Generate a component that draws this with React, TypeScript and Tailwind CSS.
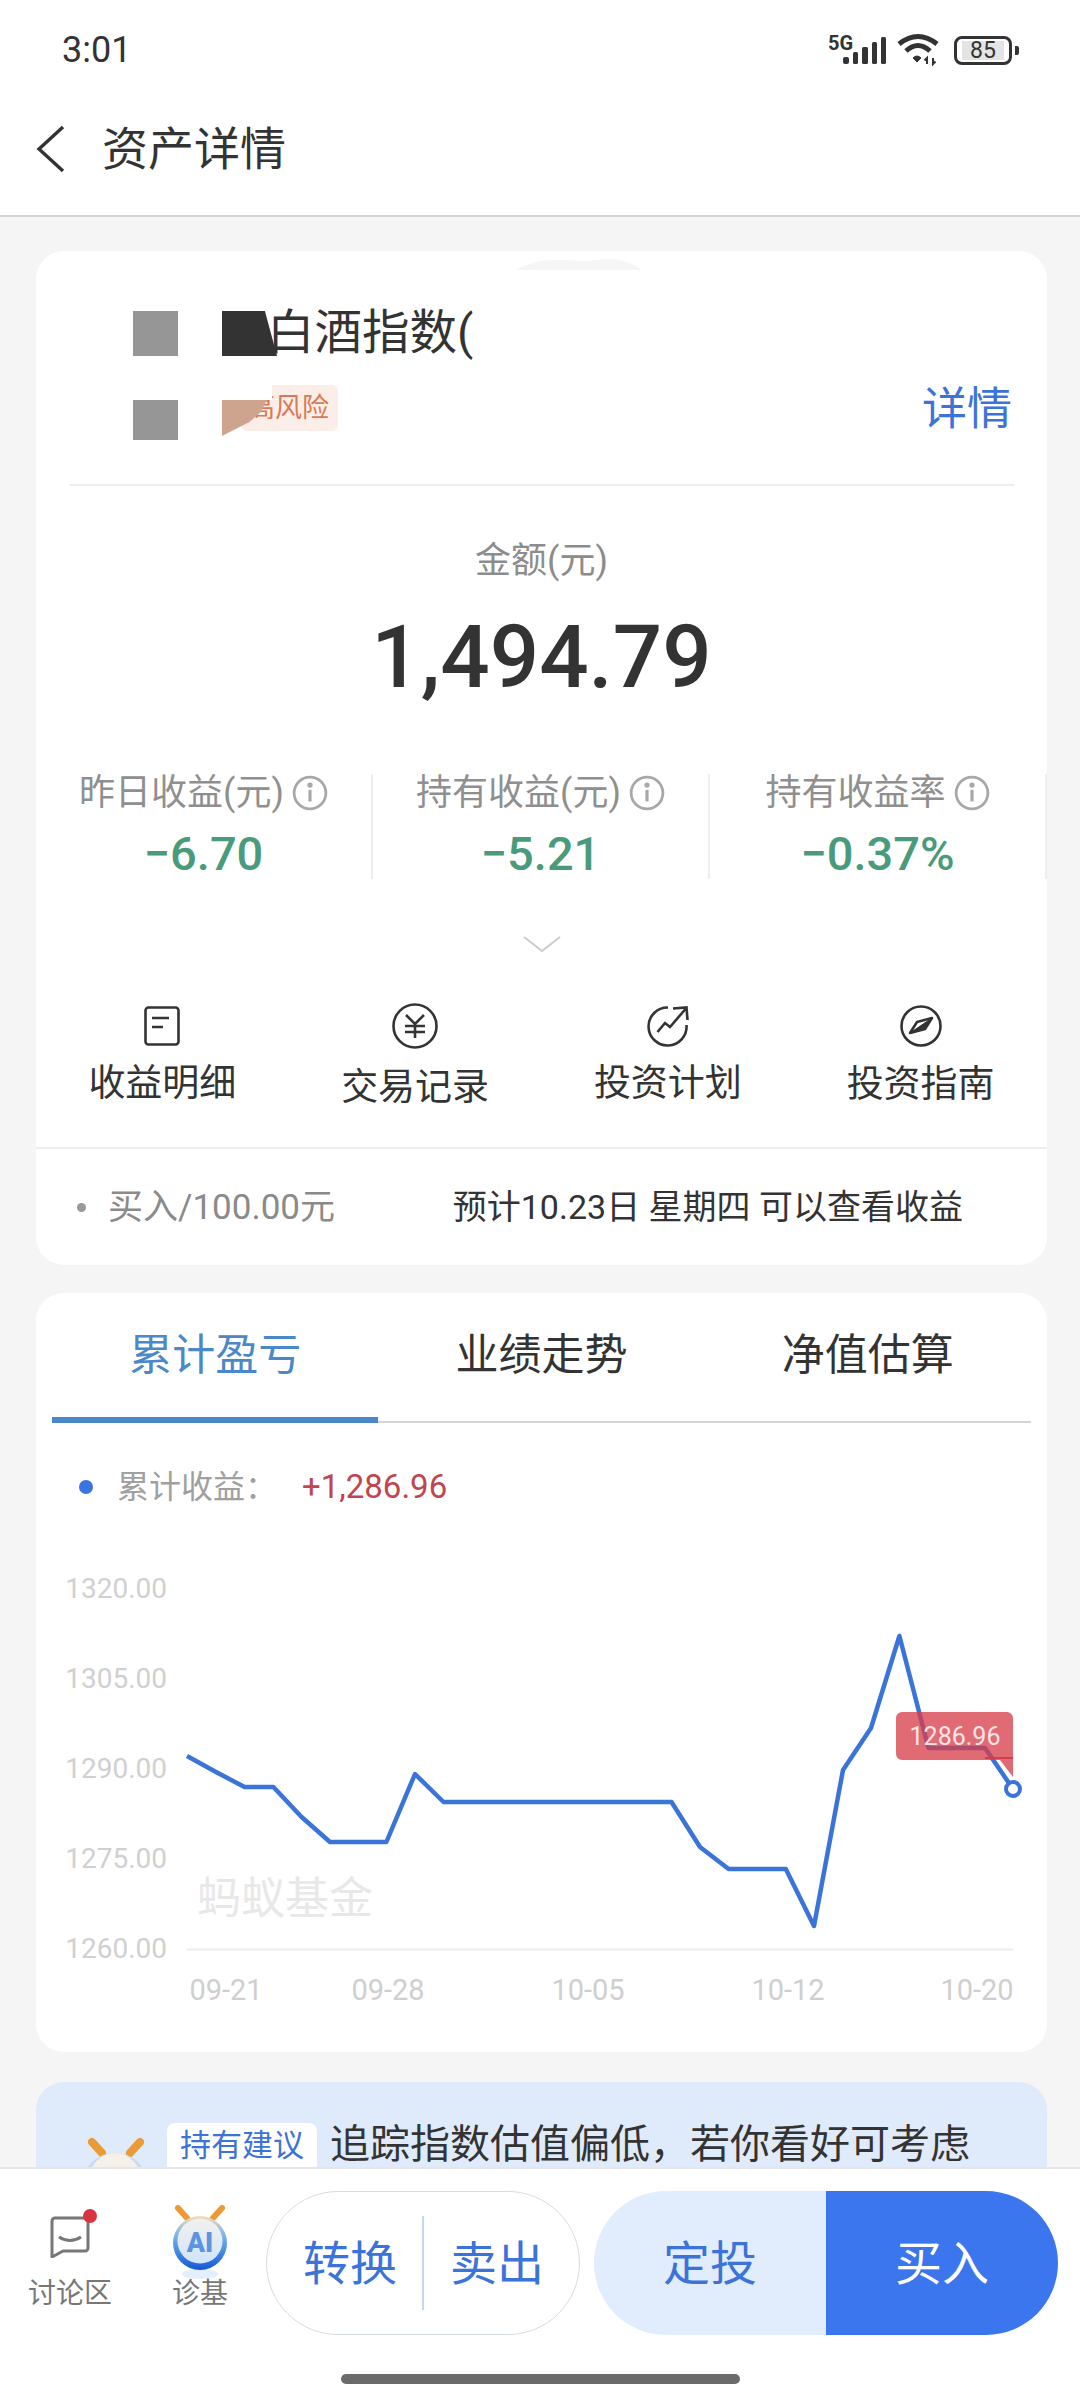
const stats = [
  { label: "昨日收益(元)", value: "−6.70" },
  { label: "持有收益(元)", value: "−5.21" },
  { label: "持有收益率", value: "−0.37%" },
];

const chartPoints =
  "187,1756 216,1772 244.5,1787 273.4,1787 301.6,1817 330,1842 358,1842 386.4,1842 415,1774 443.5,1802 671.5,1802 700,1847 728.6,1869 785.8,1869 814,1926 843,1770 871,1728 899.4,1636 928.4,1748 985,1748 1013,1789";

const yLabels = [
  { text: "1320.00", y: 1588 },
  { text: "1305.00", y: 1678 },
  { text: "1290.00", y: 1768 },
  { text: "1275.00", y: 1858 },
  { text: "1260.00", y: 1948 },
];

const xLabels = [
  { text: "09-21", x: 226 },
  { text: "09-28", x: 388 },
  { text: "10-05", x: 588 },
  { text: "10-12", x: 788 },
  { text: "10-20", x: 977 },
];

function StatusIcons() {
  return (
    <div className="flex items-center">
      <svg width="66" height="36" viewBox="0 0 66 36" className="mr-[4px]">
        <text x="2" y="18" fontSize="20" fontWeight="700" fill="#333" fontFamily="Roboto, sans-serif">5G</text>
        <rect x="17" y="25" width="6" height="7" rx="2" fill="#333" />
        <rect x="27" y="20" width="5" height="12" rx="1.5" fill="#333" />
        <rect x="36" y="15" width="6" height="17" rx="1.5" fill="#333" />
        <rect x="46" y="10" width="5" height="22" rx="1.5" fill="#333" />
        <rect x="55" y="5" width="5" height="27" rx="1.5" fill="#333" />
      </svg>
      <svg width="46" height="34" viewBox="0 0 46 34" className="mr-[12px]" fill="none" stroke="#333">
        <path d="M3 11 Q22 -4 41 11" strokeWidth="5" />
        <path d="M10 18 Q22 7 34 18" strokeWidth="5" />
        <path d="M17 25 Q21 21 25 25 L21 29 Z" fill="#333" strokeWidth="1" />
        <path d="M31 31V25L28.5 27.5M37 25V31L39.5 28.5" strokeWidth="2" />
      </svg>
      <div className="flex h-[29px] w-[58px] items-center justify-center rounded-[8px] border-[3px] border-[#333] px-[3px]">
        <span className="flex h-[19px] w-[42px] items-center justify-center bg-[#e4e4e4] text-[23px] leading-none text-[#333]">85</span>
      </div>
      <div className="ml-[3px] h-[9px] w-[4px] rounded-r-[2px] bg-[#333]" />
    </div>
  );
}

function InfoIcon() {
  return (
    <svg width="36" height="36" viewBox="0 0 34 34" fill="none" stroke="#a8a8a8" strokeWidth="2.6">
      <circle cx="17" cy="17" r="15" />
      <path d="M17 14V25" strokeWidth="3" />
      <circle cx="17" cy="9.5" r="1.2" fill="#a8a8a8" />
    </svg>
  );
}

function DocIcon() {
  return (
    <svg width="36" height="40" viewBox="0 0 36 40" fill="none" stroke="#333" strokeWidth="2.6">
      <rect x="1.5" y="1.5" width="33" height="37" rx="3" />
      <path d="M8 12H25M8 21H19" />
    </svg>
  );
}

function YuanIcon() {
  return (
    <svg width="46" height="46" viewBox="0 0 46 46" fill="none" stroke="#333" strokeWidth="2.6">
      <circle cx="23" cy="23" r="21.5" />
      <path d="M14 12L23 21L32 12M13 23H33M13 29H33M23 21V35" />
    </svg>
  );
}

function TrendIcon() {
  return (
    <svg width="44" height="42" viewBox="0 0 44 42" fill="none" stroke="#333" strokeWidth="2.6">
      <path d="M22 2.5A19 19 0 1 0 40.5 20" />
      <path d="M11.5 27L19 18L24 22L39.5 4M27 3.5L40.5 2.5L41.5 15" />
    </svg>
  );
}

function CompassIcon() {
  return (
    <svg width="42" height="42" viewBox="0 0 42 42" fill="none" stroke="#333" strokeWidth="2.6">
      <circle cx="21" cy="21" r="19.5" />
      <path d="M10 28L17 17L32 13L25 24Z" strokeLinejoin="round" />
      <path d="M10 28L25 24L32 13Z" fill="#333" strokeWidth="1" />
    </svg>
  );
}

const actions = [
  { label: "收益明细", icon: <DocIcon />, top: "mt-[13px]" },
  { label: "交易记录", icon: <YuanIcon />, top: "mt-[17px]" },
  { label: "投资计划", icon: <TrendIcon />, top: "mt-[13px]" },
  { label: "投资指南", icon: <CompassIcon />, top: "mt-[14px]" },
];

function AiIcon() {
  return (
    <svg width="62" height="76" viewBox="0 0 62 76" fill="none">
      <defs>
        <linearGradient id="aiRing" x1="0" y1="0" x2="0" y2="1">
          <stop offset="0" stopColor="#f6dcb8" />
          <stop offset="0.4" stopColor="#6fb0ea" />
          <stop offset="1" stopColor="#1557d6" />
        </linearGradient>
        <linearGradient id="aiBody" x1="0" y1="0" x2="0" y2="1">
          <stop offset="0" stopColor="#f3f1ec" />
          <stop offset="1" stopColor="#d0e4fa" />
        </linearGradient>
      </defs>
      <path d="M9 3L18 13M53 3L44 13" stroke="#ea9b36" strokeWidth="6" strokeLinecap="round" />
      <ellipse cx="31" cy="69" rx="18" ry="5" fill="#e4eefc" />
      <circle cx="31" cy="38" r="27" fill="url(#aiRing)" />
      <circle cx="31" cy="36" r="22.5" fill="url(#aiBody)" />
      <text x="31" y="47" textAnchor="middle" fontSize="27" fontWeight="900" fill="#5c94e0" fontFamily="Roboto, sans-serif">AI</text>
    </svg>
  );
}

function Mascot() {
  return (
    <svg width="66" height="33" viewBox="0 0 66 33" fill="none">
      <path d="M10 8L20 19M58 8L48 19" stroke="#ea9b36" strokeWidth="8" strokeLinecap="round" />
      <ellipse cx="33" cy="46" rx="31" ry="27" fill="#c9dcef" />
      <ellipse cx="33" cy="46" rx="26" ry="27" fill="#f6f1e8" />
    </svg>
  );
}

function Chart() {
  return (
    <svg width="1011" height="522" viewBox="36 1530 1011 522" className="block [font-family:Roboto,sans-serif]">
      {yLabels.map((l) => (
        <text key={l.text} x="167" y={l.y + 10} textAnchor="end" fontSize="28" fill="#d0d0d0">{l.text}</text>
      ))}
      {xLabels.map((l) => (
        <text key={l.text} x={l.x} y={2000} textAnchor="middle" fontSize="29" fill="#cfcfcf">{l.text}</text>
      ))}
      <text x="197" y="1914" fontSize="44" fill="#e8e8e8" fontFamily="'Noto Sans CJK SC', sans-serif">蚂蚁基金</text>
      <path d="M187 1949.5H1013" stroke="#eeeeee" strokeWidth="2" />
      <polyline points={chartPoints} fill="none" stroke="#3b74d9" strokeWidth="4.5" strokeLinejoin="round" />
      <path
        d="M902 1712H1007A6 6 0 0 1 1013 1718V1777L1000 1760H902A6 6 0 0 1 896 1754V1718A6 6 0 0 1 902 1712Z"
        fill="#d63c48"
        fillOpacity="0.76"
      />
      <path d="M985 1758H1013" stroke="#d63c48" strokeWidth="2" />
      <text x="955" y="1745" textAnchor="middle" fontSize="25" fill="#fbe3e4">1286.96</text>
      <circle cx="1013" cy="1789" r="7" fill="#fff" stroke="#3b74d9" strokeWidth="4" />
    </svg>
  );
}

export default function App() {
  return (
    <div className="flex h-[2400px] w-[1080px] flex-col overflow-hidden bg-[#f5f5f5] [font-family:Roboto,'Noto_Sans_CJK_SC',sans-serif]">
      {/* status bar + title */}
      <header className="h-[217px] shrink-0 border-b-2 border-[#d2d2d2] bg-white">
        <div className="flex h-[100px] items-center justify-between pl-[62px] pr-[61px]">
          <span className="text-[36px] leading-none text-[#333]">3:01</span>
          <StatusIcons />
        </div>
        <div className="flex h-[98px] items-center pl-[36px]">
          <svg width="30" height="48" viewBox="0 0 30 48" fill="none" stroke="#333" strokeWidth="3.4">
            <path d="M27 2L3 24L27 46" />
          </svg>
          <h1 className="ml-[36px] text-[46px] font-normal leading-none text-[#333]">资产详情</h1>
        </div>
      </header>

      <main className="min-h-0 flex-1 overflow-hidden pl-[36px] pr-[33px] pt-[34px]">
        {/* asset card */}
        <section className="relative overflow-hidden rounded-[28px] bg-white">
          <svg width="126" height="12" viewBox="0 0 126 12" className="absolute left-[480px] top-[7px]">
            <path d="M0 12Q20 0 50 2Q70 4 90 1Q110 0 126 12Z" fill="#f6f6f6" />
          </svg>
          <div className="mx-[33px] h-[235px] border-b-2 border-[#eeeeee] pl-[64px] pr-[2px] pt-[60px]">
            <div className="flex h-[45px] items-center">
              <div className="h-[45px] w-[45px] bg-[#969696]" />
              <div className="z-10 ml-[44px] h-[45px] w-[55px] bg-[#333333] [clip-path:polygon(0_0,78%_0,100%_100%,0_100%)]" />
              <span className="ml-[-10px] text-[47.5px] leading-none text-[#333]">白酒指数(</span>
            </div>
            <div className="mt-[29px] flex h-[55px] items-center justify-between">
              <div className="flex h-[55px] items-start">
                <div className="mt-[15px] h-[40px] w-[45px] bg-[#969696]" />
                <div className="relative ml-[63px] flex h-[46px] w-[97px] items-center justify-end rounded-[6px] bg-[#fbeee8] pr-[9px]">
                  <span className="text-[27px] leading-none text-[#d97a55]">高风险</span>
                  <div className="absolute left-[-19px] top-0 h-[15px] w-[50px] bg-white" />
                  <div className="absolute left-[-19px] top-[15px] h-[36px] w-[45px] bg-[#cfa48f] [clip-path:polygon(0_0,100%_0,85%_35%,60%_62%,0_100%)]" />
                </div>
              </div>
              <span className="mb-[6px] text-[45px] leading-none text-[#3b73d9]">详情</span>
            </div>
          </div>

          <div className="flex flex-col items-center">
            <span className="mt-[55px] text-[36px] leading-[40px] text-[#8c8c8c]">金额(元)</span>
            <span className="mt-[26px] text-[87px] font-medium leading-[100px] text-[#333]">1,494.79</span>
          </div>

          <div className="mt-[67px] grid grid-cols-3">
            {stats.map((s) => (
              <div key={s.label} className="flex h-[105px] flex-col items-center border-r-2 border-[#eeeeee]">
                <div className="flex h-[38px] items-center gap-[8px]">
                  <span className="text-[36px] leading-none text-[#8f8f8f]">{s.label}</span>
                  <InfoIcon />
                </div>
                <span className="mt-[18px] text-[47px] font-medium leading-[50px] text-[#4a9a7c]">{s.value}</span>
              </div>
            ))}
          </div>

          <div className="mt-[57px] flex justify-center">
            <svg width="38" height="16" viewBox="0 0 38 16" fill="none" stroke="#cccccc" strokeWidth="2">
              <path d="M1 1L19 15L37 1" />
            </svg>
          </div>

          <div className="mt-[51px] grid h-[146px] grid-cols-4 border-b-2 border-[#eeeeee]">
            {actions.map((a) => (
              <div key={a.label} className="flex flex-col items-center">
                <div className="flex h-[46px] items-center justify-center">{a.icon}</div>
                <span className={`${a.top} text-[37px] leading-[44px] text-[#333]`}>{a.label}</span>
              </div>
            ))}
          </div>

          <div className="flex h-[116px] items-center justify-between pl-[41px] pr-[84px]">
            <div className="flex items-center">
              <span className="h-[9px] w-[9px] rounded-full bg-[#999]" />
              <span className="ml-[22px] text-[35px] leading-none text-[#8a8a8a]">买入/100.00元</span>
            </div>
            <span className="text-[34px] leading-none text-[#333]">预计10.23日 星期四 可以查看收益</span>
          </div>
        </section>

        {/* chart card */}
        <section className="mt-[28px] overflow-hidden rounded-[28px] bg-white">
          <div className="mx-[16px] grid h-[130px] grid-cols-3 border-b-2 border-[#d4d4d4]">
            <div className="relative flex items-center justify-center pb-[4px] text-[43px] leading-none text-[#4a88c7]">
              累计盈亏
              <div className="absolute bottom-[-2px] left-0 right-0 h-[6px] bg-[#4a87c8]" />
            </div>
            <div className="flex items-center justify-center pb-[4px] text-[43px] leading-none text-[#333]">业绩走势</div>
            <div className="flex items-center justify-center pb-[4px] text-[43px] leading-none text-[#333]">净值估算</div>
          </div>
          <div className="flex h-[107px] items-center pl-[43px] pt-[20px]">
            <span className="h-[14px] w-[14px] rounded-full bg-[#3a74e0]" />
            <span className="ml-[24px] w-[185px] text-[32px] leading-none text-[#a0a0a0]">累计收益：</span>
            <span className="text-[33px] leading-none text-[#c0454f]">+1,286.96</span>
          </div>
          <Chart />
        </section>

        {/* advice card */}
        <section className="mt-[30px] h-[200px] rounded-[28px] bg-[#dfebfb] pl-[46px] pt-[41px]">
          <div className="flex items-start">
            <div className="mt-[11px] w-[85px]">
              <Mascot />
            </div>
            <span className="h-[60px] w-[150px] rounded-[8px] bg-white pt-[7px] text-center text-[31px] leading-[31px] text-[#3b73d9]">持有建议</span>
            <span className="ml-[13px] mt-[2px] text-[40px] leading-[40px] text-[#333]">追踪指数估值偏低，若你看好可考虑</span>
          </div>
        </section>
      </main>

      {/* bottom bar */}
      <footer className="relative h-[233px] shrink-0 border-t-2 border-[#e6e6e6] bg-white pt-[22px]">
        <div className="flex items-start">
          <div className="flex w-[140px] flex-col items-center pt-[25px]">
            <div className="relative">
              <svg width="42" height="42" viewBox="0 0 42 42" fill="none" stroke="#777" strokeWidth="3">
                <path d="M6 2H36A3 3 0 0 1 39 5V32A3 3 0 0 1 36 35H14L3 41V5A3 3 0 0 1 6 2Z" strokeLinejoin="round" />
                <path d="M10 21Q21 28 32 21" />
              </svg>
              <span className="absolute right-[-6px] top-[-7px] h-[14px] w-[14px] rounded-full bg-[#d8343f]" />
            </div>
            <span className="mt-[22px] text-[28px] leading-none text-[#777]">讨论区</span>
          </div>
          <div className="flex w-[126px] flex-col items-center pl-[5px] pr-[11px] pt-[14px]">
            <AiIcon />
            <span className="mt-[-1px] text-[28px] leading-none text-[#777]">诊基</span>
          </div>
          <div className="flex h-[144px] w-[314px] items-center rounded-[72px] border border-[#d5dde2] text-[47px] leading-none text-[#3b73d9]">
            <span className="flex h-[94px] w-[157px] items-center justify-end border-r-2 border-[#c4d8ee] pr-[25px]">转换</span>
            <span className="pl-[26px]">卖出</span>
          </div>
          <div className="ml-[14px] flex h-[144px] w-[464px] overflow-hidden rounded-[72px] text-[47px] leading-none">
            <span className="flex w-[232px] items-center justify-center bg-[#e1ecfd] text-[#3b73d9]">定投</span>
            <span className="flex w-[232px] items-center justify-center bg-[#3b76ee] text-white">买入</span>
          </div>
        </div>
        <div className="mx-auto mt-[39px] h-[10px] w-[399px] rounded-full bg-[#6b6b6b]" />
      </footer>
    </div>
  );
}
